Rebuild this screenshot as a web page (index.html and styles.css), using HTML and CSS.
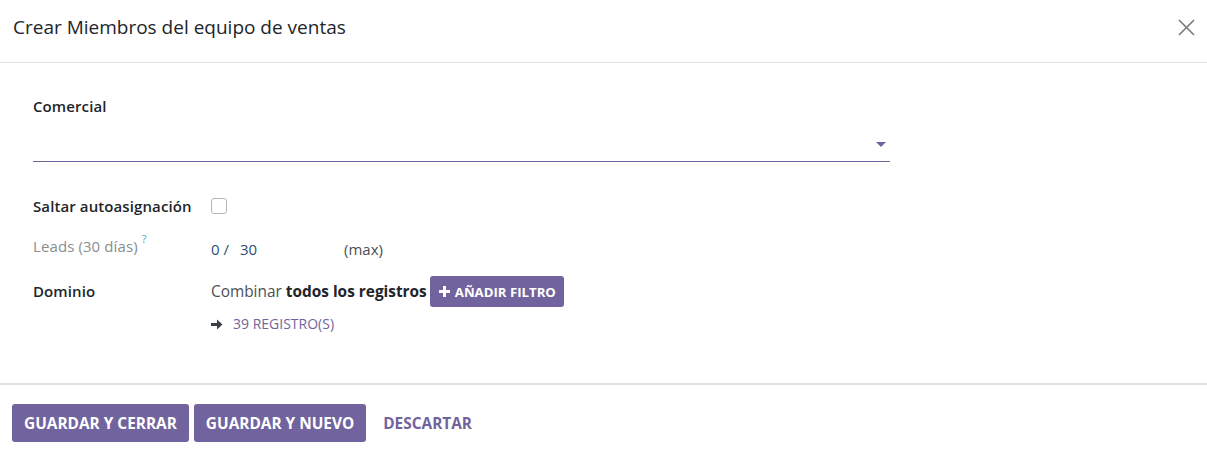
FILE: index.html
```html
<!DOCTYPE html>
<html lang="es">
<head>
<meta charset="utf-8">
<title>Crear Miembros del equipo de ventas</title>
<link rel="stylesheet" href="styles.css">
</head>
<body>
<div class="modal">
  <header class="modal-header">
    <h4 class="modal-title">Crear Miembros del equipo de ventas</h4>
    <button class="close" aria-label="Cerrar">
      <svg width="17" height="17" viewBox="0 0 17 17"><path d="M1 1 L16 16 M16 1 L1 16" stroke="#7a7a7a" stroke-width="1.6" fill="none"/></svg>
    </button>
  </header>
  <main class="modal-body">
    <div class="field-block">
      <label class="lbl">Comercial</label>
      <div class="many2one">
        <input class="m2o-input" type="text">
        <span class="caret"></span>
      </div>
    </div>
    <div class="grid">
      <div class="lbl row-lbl r1">Saltar autoasignación</div>
      <div class="row-val r1"><span class="checkbox"></span></div>

      <div class="lbl-muted row-lbl r2">Leads (30 días)<sup class="help">?</sup></div>
      <div class="row-val r2 leads"><span class="frac">0 /</span><span class="num">30</span><span class="max">(max)</span></div>

      <div class="lbl row-lbl dom-lbl">Dominio</div>
      <div class="row-val domain">
        <div class="dom-line">
          <span>Combinar <b>todos los registros</b></span>
          <button class="btn btn-sm"><svg class="plus" width="11" height="11" viewBox="0 0 11 11"><path d="M4 0 H7 V4 H11 V7 H7 V11 H4 V7 H0 V4 H4 Z" fill="#fff"/></svg>AÑADIR FILTRO</button>
        </div>
        <div class="records">
          <svg width="12" height="11" viewBox="0 0 12 11"><path d="M0 4 H6 V0.5 L11.5 5.5 L6 10.5 V7 H0 Z" fill="#3a3f44"/></svg>
          <span>39 REGISTRO(S)</span>
        </div>
      </div>
    </div>
  </main>
  <footer class="modal-footer">
    <button class="btn btn-primary">GUARDAR Y CERRAR</button>
    <button class="btn btn-primary">GUARDAR Y NUEVO</button>
    <button class="btn btn-link">DESCARTAR</button>
  </footer>
</div>
</body>
</html>
```

FILE: styles.css
```css
* { box-sizing: border-box; }
html, body { margin: 0; padding: 0; background: #fff; }
body {
  font-family: "Open Sans", "Noto Sans", "DejaVu Sans", sans-serif;
  font-size: 15px;
  line-height: 22px;
  color: #212529;
}
.modal {
  width: 1207px;
  height: 452px;
  display: flex;
  flex-direction: column;
}
.modal-header {
  flex: 0 0 63px;
  border-bottom: 1px solid #dee2e6;
  display: flex;
  align-items: flex-start;
  justify-content: space-between;
  padding: 13px 12px 0 13px;
}
.modal-title {
  margin: 0;
  font-size: 19px;
  line-height: 28px;
  font-weight: 400;
  color: #212529;
}
.close {
  border: 0;
  background: none;
  padding: 0;
  margin-top: 6px;
  display: flex;
}
.modal-body {
  flex: 1;
  padding: 0 33px;
}
.field-block {
  padding-top: 32px;
}
.lbl { font-weight: 600; color: #212529; letter-spacing: 0.1px; }
.lbl-muted { color: #8a8d90; letter-spacing: 0.1px; }
.field-block .lbl { display: block; }
.many2one {
  position: relative;
  width: 857px;
  margin-top: 17px;
}
.m2o-input {
  display: block;
  width: 100%;
  height: 28px;
  border: 0;
  border-bottom: 1px solid #71639e;
  outline: none;
  font: inherit;
  background: transparent;
}
.caret {
  position: absolute;
  right: 4px;
  top: 8px;
  width: 0; height: 0;
  border-left: 5px solid transparent;
  border-right: 5px solid transparent;
  border-top: 5px solid #71639e;
}
.grid {
  display: grid;
  grid-template-columns: 178px 1fr;
  margin-top: 33px;
}
.r1 { height: 40px; }
.r2 { height: 41px; }
.checkbox {
  display: inline-block;
  width: 16px; height: 16px;
  border: 1px solid #b3b7bb;
  border-radius: 3px;
  margin-top: 3px;
}
.help {
  color: #3fa5c4;
  font-size: 11px;
  line-height: 10px;
  vertical-align: top;
  position: relative;
  top: -1px;
  margin-left: 4px;
}
.leads { display: flex; color: #2c4f77; padding-top: 3px; }
.leads .frac { width: 29px; }
.leads .num { width: 104px; }
.leads .max { color: #4a4f55; }
.dom-lbl { padding-top: 4px; }
.dom-line {
  display: flex;
  align-items: center;
  gap: 3px;
  color: #4a4f55;
  height: 31px;
  font-size: 15.4px;
}
.dom-line b { color: #212529; font-weight: 700; }
.btn {
  border: 0;
  font-family: inherit;
  font-weight: 700;
  text-transform: uppercase;
  cursor: pointer;
}
.btn-sm {
  background: #71639e;
  color: #fff;
  font-size: 13.2px;
  height: 31px;
  padding: 0 8px 0 9px;
  border-radius: 3px;
  display: flex;
  align-items: center;
}
.plus { margin-right: 5px; }
.records {
  display: flex;
  align-items: center;
  gap: 10px;
  margin-top: 7px;
  color: #71639e;
  font-size: 14px;
  line-height: 20px;
}
.modal-footer {
  flex: 0 0 69px;
  border-top: 2px solid #dee2e6;
  display: flex;
  align-items: flex-start;
  padding: 19px 12px 0;
  gap: 5px;
}
.btn-primary {
  background: #71639e;
  color: #fff;
  height: 38px;
  padding: 1px 12px 0;
  font-size: 15.4px;
  border-radius: 3px;
}
.btn-link {
  background: none;
  color: #71639e;
  height: 38px;
  padding: 1px 12px 0;
  font-size: 15.4px;
}
```
